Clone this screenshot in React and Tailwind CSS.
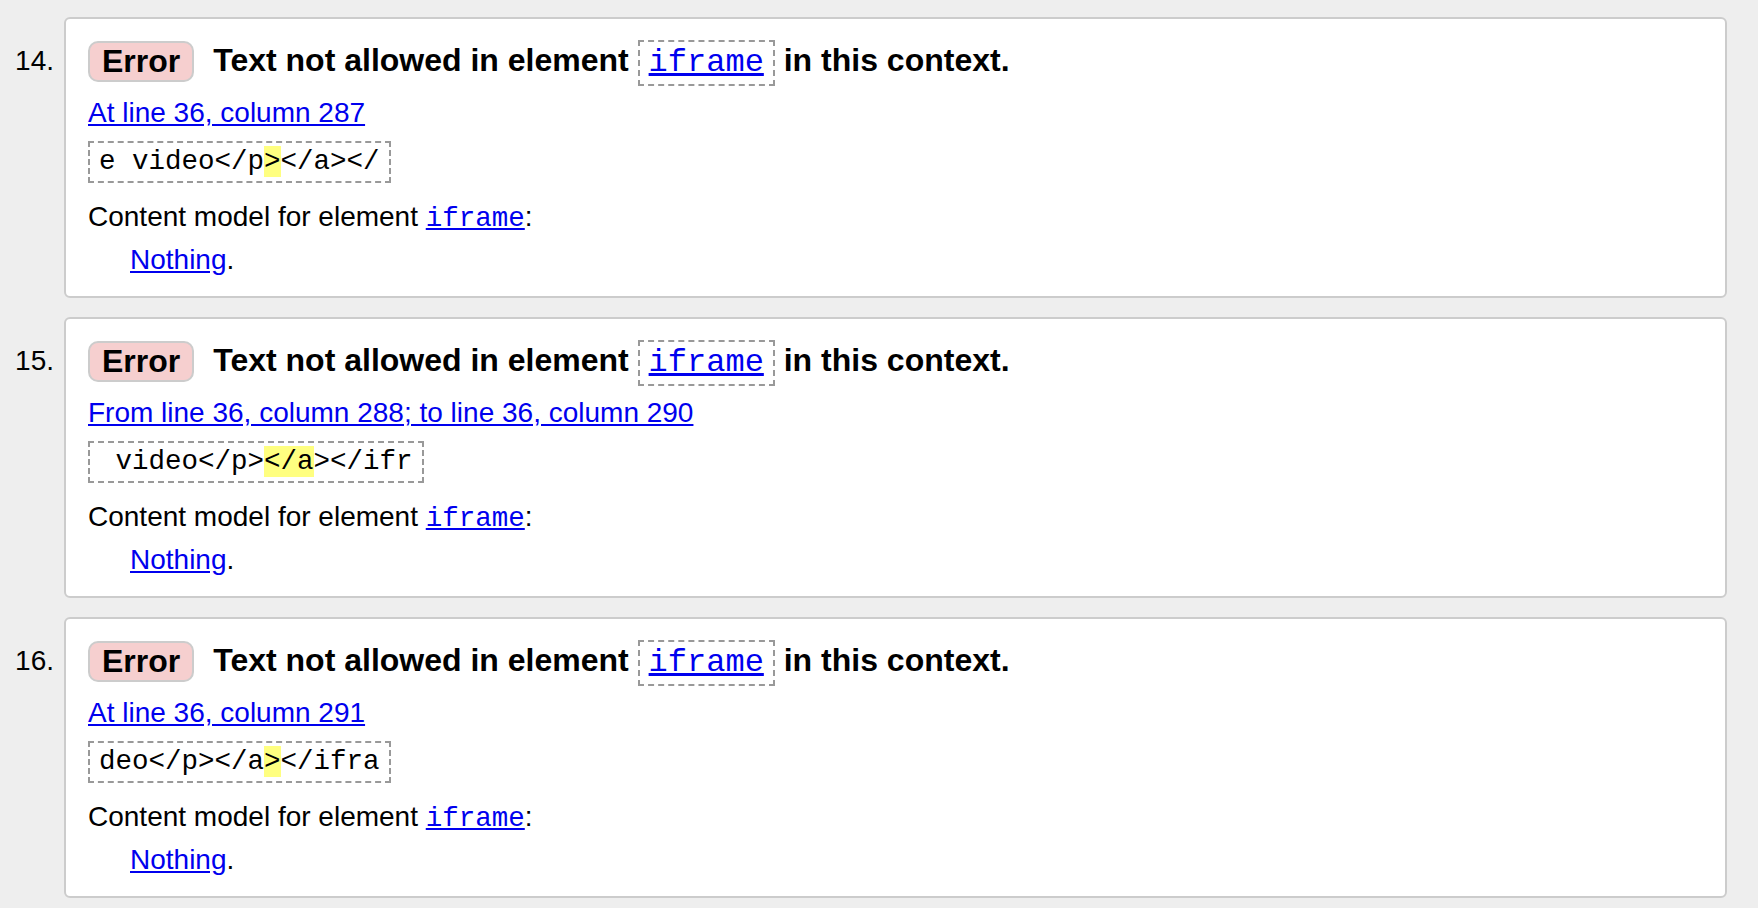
import React from 'react'

const MONO = "font-['Liberation_Mono','Courier_New',monospace]"

const messages = [
  {
    n: 14,
    where: 'At line 36, column 287',
    code: ['e video</p', '>', '</a></'],
  },
  {
    n: 15,
    where: 'From line 36, column 288; to line 36, column 290',
    code: [' video</p>', '</a', '></ifr'],
  },
  {
    n: 16,
    where: 'At line 36, column 291',
    code: ['deo</p></a', '>', '</ifra'],
  },
]

function Message({ msg }) {
  return (
    <li className="flex">
      {/* Number */}
      <div className="w-[64px] shrink-0 pr-[10px] pt-[23px] text-right text-[28px] leading-[42px]">
        {msg.n}.
      </div>

      {/* Card */}
      <div className="flex-1 mr-[31px] h-[281px] box-border border-2 border-[#cccccc] rounded-[6px] bg-white pl-[22px] pt-[19px]">
        <div className="flex items-center h-[46px]">
          <span className="border-2 border-[#cccccc] bg-[#f6cfcf] rounded-[10px] px-[12px] text-[32px] leading-[37px] font-bold">
            Error
          </span>
          <span className="ml-[19px] text-[32px] leading-[46px] font-bold whitespace-nowrap">
            Text not allowed in element{' '}
            <span className={`inline-block border-2 border-dashed border-[#999999] px-[9px] leading-[42px] font-normal ${MONO}`}>
              <a className="text-[#0000ee] underline">iframe</a>
            </span>{' '}
            in this context.
          </span>
        </div>

        <p className="mt-[8px] text-[28px] leading-[42px]">
          <a className="text-[#0000ee] underline">{msg.where}</a>
        </p>

        <div className="mt-[7px]">
          <code className={`inline-block border-2 border-dashed border-[#999999] px-[9px] text-[27.5px] leading-[38px] whitespace-pre ${MONO}`}>
            {msg.code[0]}
            <span className="bg-[#ffff80]">{msg.code[1]}</span>
            {msg.code[2]}
          </code>
        </div>

        <p className="mt-[13px] text-[28px] leading-[41px]">
          Content model for element{' '}
          <a className={`text-[#0000ee] underline text-[27.5px] ${MONO}`}>iframe</a>:
        </p>
        <p className="pl-[42px] text-[28px] leading-[41px]">
          <a className="text-[#0000ee] underline">Nothing</a>.
        </p>
      </div>
    </li>
  )
}

export default function App() {
  return (
    <div className="min-h-screen bg-[#eeeeee] pt-[17px] text-black font-['Liberation_Sans',Arial,sans-serif]">
      <ol className="flex flex-col gap-[19px]">
        {messages.map(m => (
          <Message key={m.n} msg={m} />
        ))}
      </ol>
    </div>
  )
}
